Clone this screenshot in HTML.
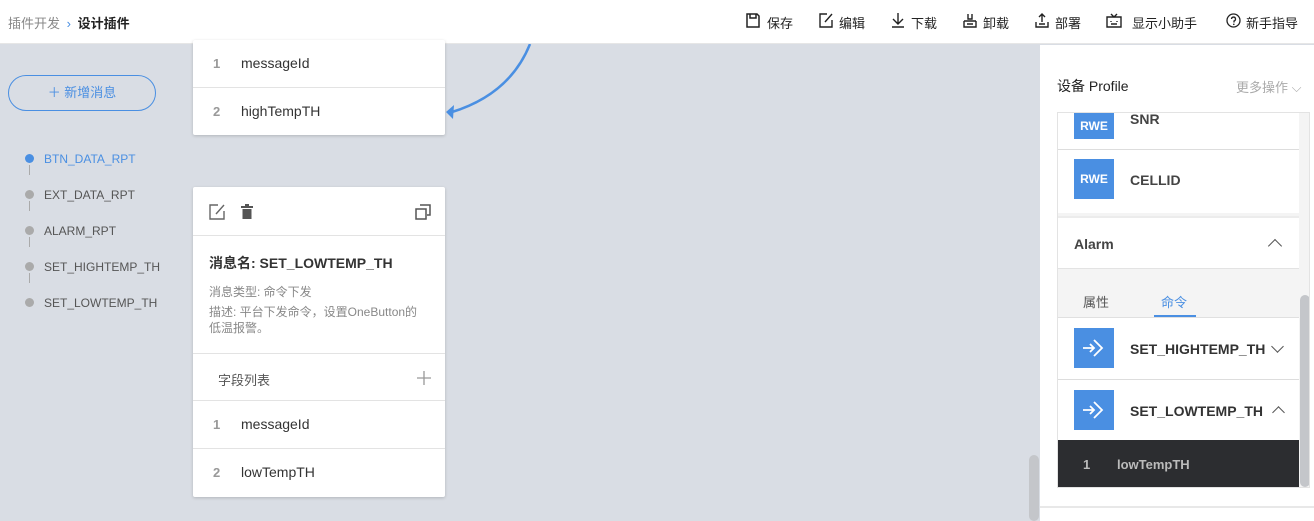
<!DOCTYPE html>
<html><head><meta charset="utf-8"><style>
*{margin:0;padding:0;box-sizing:border-box}
body{width:1314px;height:521px;overflow:hidden;position:relative;background:#d9dde4;font-family:"Liberation Sans","Noto Sans CJK SC",sans-serif;color:#333}
.a{position:absolute}
.hdr{left:0;top:0;width:1314px;height:44px;background:#fff;border-bottom:1px solid #e6e6e6}
.t{font-size:13px;white-space:nowrap}
.tb{position:absolute;top:13px;font-size:13px;color:#222;white-space:nowrap}
.ic{position:absolute;top:13px}
.card{background:#fff;box-shadow:0 1px 3px rgba(0,0,0,.18);border-radius:2px}
.row{position:absolute;left:0;width:252px;height:48px;border-top:1px solid #e3e3e3;font-size:14px}
.row .n{position:absolute;left:20px;top:16px;color:#999;font-weight:bold;font-size:13px}
.row .v{position:absolute;left:48px;top:15px;color:#333}
.dot{position:absolute;left:25px;width:9px;height:9px;border-radius:50%;background:#aaa}
.ln{position:absolute;left:29px;width:1px;height:10px;background:#aaa}
.lab{position:absolute;left:44px;font-size:12px;color:#555}
.rwe{position:absolute;left:16px;width:40px;height:40px;background:#4a8fe2;color:#fff;font-weight:bold;font-size:12px;text-align:center;line-height:40px}
.ib{position:absolute;left:16px;width:40px;height:40px;background:#4a8fe2}
</style></head><body>
<div class="a hdr">
 <div class="a t" style="left:8px;top:13px;color:#888">插件开发 <span style="color:#4a8fe2;margin:0 3px">›</span> <b style="color:#222">设计插件</b></div>
 <svg class="ic" style="left:746px" width="14" height="15"><path d="M1 1h10l2 2v11H1z M4 1v4h6V1" fill="none" stroke="#222" stroke-width="1.5"/></svg>
 <div class="tb" style="left:767px">保存</div>
 <svg class="ic" style="left:819px" width="14" height="15"><path d="M8 1H1v13h12V7 M6 9l7-8" fill="none" stroke="#222" stroke-width="1.4"/></svg>
 <div class="tb" style="left:839px">编辑</div>
 <svg class="ic" style="left:891px" width="14" height="15"><path d="M7 0v11 M2 6l5 5 5-5 M1 14h12" fill="none" stroke="#222" stroke-width="1.4"/></svg>
 <div class="tb" style="left:911px">下载</div>
 <svg class="ic" style="left:963px" width="14" height="15"><path d="M5 1v5h4V1 M1 8h12 M1 8v6h12V8 M4 11h6" fill="none" stroke="#222" stroke-width="1.4"/></svg>
 <div class="tb" style="left:983px">卸载</div>
 <svg class="ic" style="left:1035px" width="14" height="15"><path d="M7 1v8 M4 4l3-3 3 3 M1 9v5h12V9 M4 11h6" fill="none" stroke="#222" stroke-width="1.4"/></svg>
 <div class="tb" style="left:1055px">部署</div>
 <svg class="ic" style="left:1106px" width="16" height="15"><path d="M5 1l3 3 3-3 M1 4h14v10H1z M5 8v1 M11 8v1 M5 11h6" fill="none" stroke="#222" stroke-width="1.4"/></svg>
 <div class="tb" style="left:1132px">显示小助手</div>
 <svg class="ic" style="left:1226px" width="15" height="15"><circle cx="7.5" cy="7.5" r="6.5" fill="none" stroke="#222" stroke-width="1.3"/><path d="M5.5 6a2 2 0 1 1 2.5 2v1.5" fill="none" stroke="#222" stroke-width="1.3"/><circle cx="7.8" cy="11.3" r=".8" fill="#222"/></svg>
 <div class="tb" style="left:1246px">新手指导</div>
</div>
<!-- left -->
<div class="a" style="left:8px;top:75px;width:148px;height:36px;border:1px solid #4a8fe2;border-radius:18px;color:#4a8fe2;font-size:13px;text-align:center;line-height:34px">＋ 新增消息</div>
<div class="dot" style="top:154px;background:#4a8fe2"></div><div class="ln" style="top:165px"></div><div class="lab" style="top:152px;color:#4a8fe2">BTN_DATA_RPT</div>
<div class="dot" style="top:190px"></div><div class="ln" style="top:201px"></div><div class="lab" style="top:188px">EXT_DATA_RPT</div>
<div class="dot" style="top:226px"></div><div class="ln" style="top:237px"></div><div class="lab" style="top:224px">ALARM_RPT</div>
<div class="dot" style="top:262px"></div><div class="ln" style="top:273px"></div><div class="lab" style="top:260px">SET_HIGHTEMP_TH</div>
<div class="dot" style="top:298px"></div><div class="lab" style="top:296px">SET_LOWTEMP_TH</div>
<!-- card 1 -->
<div class="a card" style="left:193px;top:40px;width:252px;height:95px">
 <div class="row" style="top:0;border-top:none"><span class="n">1</span><span class="v">messageId</span></div>
 <div class="row" style="top:47px"><span class="n">2</span><span class="v">highTempTH</span></div>
</div>
<svg class="a" style="left:440px;top:44px" width="100" height="80"><path d="M90 0 Q70 50 12 68" fill="none" stroke="#4a8fe2" stroke-width="2.5"/><path d="M6 68 L14 61 L13 75 Z" fill="#4a8fe2"/></svg>
<!-- card 2 -->
<div class="a card" style="left:193px;top:187px;width:252px;height:310px">
 <svg class="a" style="left:16px;top:17px" width="16" height="16"><path d="M9 1H1v14h14V7 M7 10l8-9" fill="none" stroke="#666" stroke-width="1.4"/></svg>
 <svg class="a" style="left:47px;top:17px" width="14" height="16"><path d="M1 3h12 M5 1h4" stroke="#555" stroke-width="2"/><path d="M2.5 5h9v10h-9z" fill="#555"/></svg>
 <svg class="a" style="left:222px;top:17px" width="16" height="16"><path d="M5 1h10v10h-3 M1 5h10v10H1z" fill="none" stroke="#555" stroke-width="1.5"/></svg>
 <div class="a" style="left:0;top:48px;width:252px;border-top:1px solid #e3e3e3"></div>
 <div class="a t" style="left:16px;top:66px;font-weight:bold;font-size:14px;color:#333">消息名: SET_LOWTEMP_TH</div>
 <div class="a" style="left:16px;top:97px;font-size:12px;color:#888;line-height:16px;width:215px">消息类型: 命令下发<br><span style="display:block;margin-top:4px">描述: 平台下发命令，设置OneButton的低温报警。</span></div>
 <div class="a" style="left:0;top:166px;width:252px;border-top:1px solid #e3e3e3"></div>
 <div class="a t" style="left:25px;top:183px;color:#555">字段列表</div>
 <svg class="a" style="left:223px;top:183px" width="16" height="16"><path d="M8 1v14 M1 8h14" stroke="#999" stroke-width="1.3"/></svg>
 <div class="row" style="top:213px"><span class="n">1</span><span class="v">messageId</span></div>
 <div class="row" style="top:261px"><span class="n">2</span><span class="v">lowTempTH</span></div>
</div>
<!-- scrollbar -->
<div class="a" style="left:1029px;top:455px;width:10px;height:66px;background:#c4c6ca;border-radius:5px"></div>
<!-- right panel -->
<div class="a" style="left:1040px;top:45px;width:274px;height:476px;background:#fff"></div>
<div class="a t" style="left:1057px;top:76px;font-size:14px;color:#222">设备 Profile</div>
<div class="a t" style="left:1236px;top:77px;color:#aaa">更多操作 ⌵</div>
<div class="a" style="left:1057px;top:112px;width:253px;height:376px;border:1px solid #e3e3e3;overflow:hidden;background:#f4f4f4">
 <div class="a" style="left:0;top:0;width:241px;height:100px;background:#fff"></div>
 <div class="rwe" style="top:-14px;line-height:40px"><span style="position:relative;top:7px">RWE</span></div>
 <div class="a t" style="left:72px;top:-2px;font-weight:bold;font-size:14px;color:#444">SNR</div>
 <div class="a" style="left:0;top:36px;width:241px;border-top:1px solid #ddd"></div>
 <div class="rwe" style="top:46px">RWE</div>
 <div class="a t" style="left:72px;top:59px;font-weight:bold;font-size:14px;color:#444">CELLID</div>
 <div class="a" style="left:0;top:103px;width:241px;height:53px;background:#fff;border-top:2px solid #ececec;border-bottom:1px solid #e3e3e3"></div>
 <div class="a t" style="left:16px;top:123px;font-weight:bold;font-size:14px;color:#444">Alarm</div>
 <div class="a" style="left:212px;top:128px;width:10px;height:10px;border-left:1.5px solid #555;border-top:1.5px solid #555;transform:rotate(45deg)"></div>
 <div class="a t" style="left:25px;top:179px;color:#555">属性</div>
 <div class="a t" style="left:103px;top:179px;color:#4a8fe2">命令</div>
 <div class="a" style="left:96px;top:202px;width:42px;height:2px;background:#4a8fe2"></div>
 <div class="a" style="left:0;top:204px;width:241px;height:124px;background:#fff;border-top:1px solid #e0e0e0"></div>
 <div class="ib" style="top:215px"><svg width="40" height="40"><path d="M9 20h11 M16 16l4 4-4 4 M20 12l8 8-8 8" fill="none" stroke="#fff" stroke-width="1.8"/></svg></div>
 <div class="a t" style="left:72px;top:228px;font-weight:bold;font-size:14px;color:#333">SET_HIGHTEMP_TH</div>
 <div class="a" style="left:215px;top:229px;width:9px;height:9px;border-right:1.5px solid #555;border-bottom:1.5px solid #555;transform:rotate(45deg)"></div>
 <div class="a" style="left:0;top:266px;width:241px;border-top:1px solid #ddd"></div>
 <div class="ib" style="top:277px"><svg width="40" height="40"><path d="M9 20h11 M16 16l4 4-4 4 M20 12l8 8-8 8" fill="none" stroke="#fff" stroke-width="1.8"/></svg></div>
 <div class="a t" style="left:72px;top:290px;font-weight:bold;font-size:14px;color:#333">SET_LOWTEMP_TH</div>
 <div class="a" style="left:216px;top:295px;width:9px;height:9px;border-left:1.5px solid #555;border-top:1.5px solid #555;transform:rotate(45deg)"></div>
 <div class="a" style="left:0;top:327px;width:241px;height:48px;background:#2c2d30"></div>
 <div class="a t" style="left:25px;top:344px;color:#bbb;font-weight:bold">1</div>
 <div class="a t" style="left:59px;top:344px;color:#bbb;font-weight:bold">lowTempTH</div>
 <div class="a" style="left:242px;top:182px;width:10px;height:192px;background:#c4c6ca;border-radius:5px"></div>
</div>
<div class="a" style="left:1040px;top:506px;width:274px;border-top:2px solid #e8e8e8"></div>
</body></html>
